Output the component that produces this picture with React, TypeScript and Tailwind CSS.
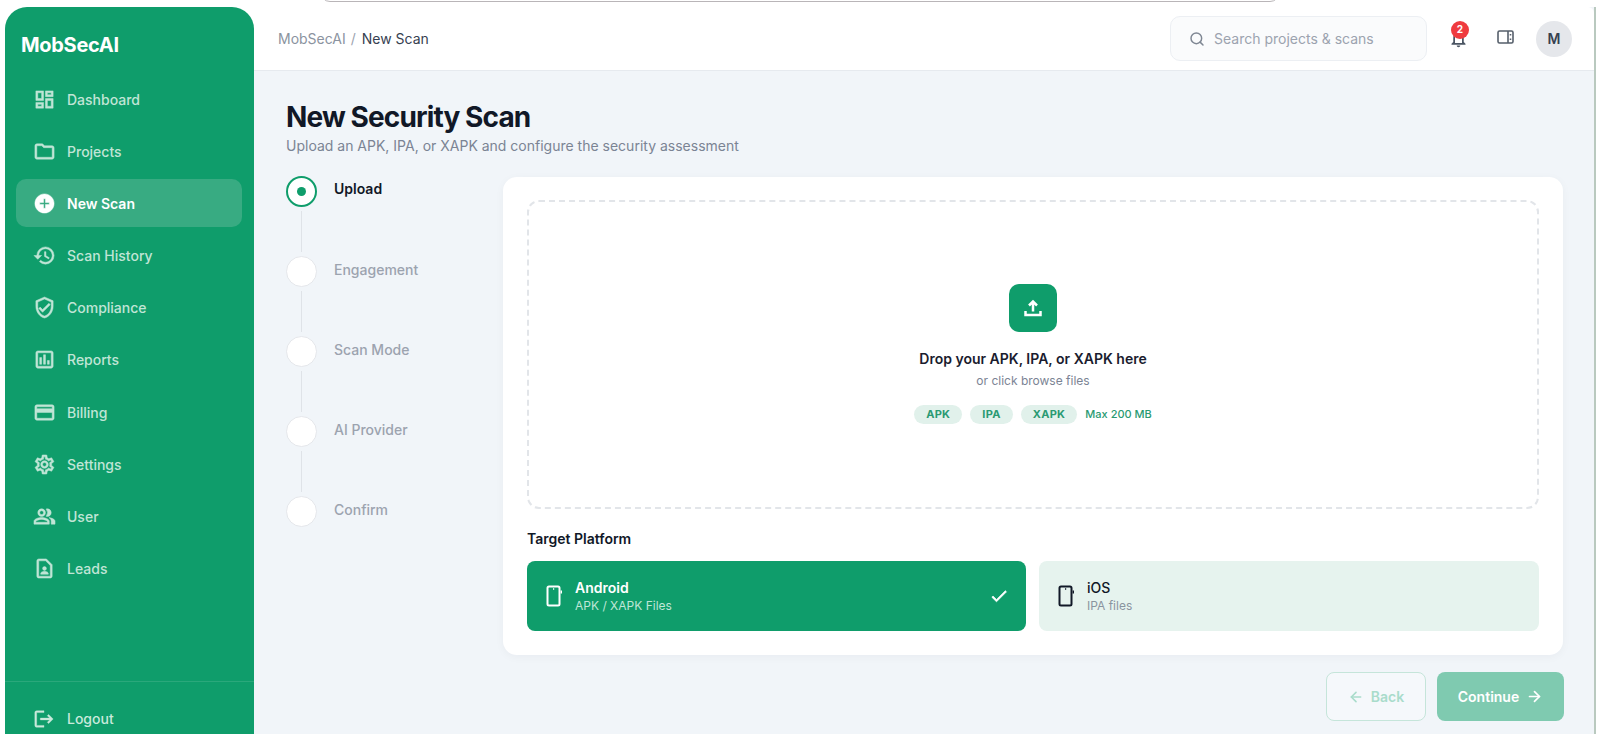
import { ArrowLeft, ArrowRight, Search } from "lucide-react";
import {
  MdAddCircle,
  MdCheck,
  MdHistory,
  MdOutlineAssessment,
  MdOutlineContactPage,
  MdOutlineCreditCard,
  MdOutlineDashboard,
  MdOutlineFolder,
  MdOutlineNotifications,
  MdOutlinePeopleAlt,
  MdOutlineSettings,
  MdOutlineVerifiedUser,
  MdLogout,
} from "react-icons/md";

const nav = [
  { label: "Dashboard", Icon: MdOutlineDashboard },
  { label: "Projects", Icon: MdOutlineFolder },
  { label: "New Scan", Icon: MdAddCircle, active: true },
  { label: "Scan History", Icon: MdHistory },
  { label: "Compliance", Icon: MdOutlineVerifiedUser },
  { label: "Reports", Icon: MdOutlineAssessment },
  { label: "Billing", Icon: MdOutlineCreditCard },
  { label: "Settings", Icon: MdOutlineSettings },
  { label: "User", Icon: MdOutlinePeopleAlt },
  { label: "Leads", Icon: MdOutlineContactPage },
];

const steps = ["Upload", "Engagement", "Scan Mode", "AI Provider", "Confirm"];

function Phone({ className }: { className: string }) {
  return (
    <svg viewBox="0 0 20 24" fill="none" className={className}>
      <rect x="3.5" y="2.5" width="12" height="19" rx="1.5" stroke="currentColor" strokeWidth="2" />
      <path d="M17.3 6.5v3" stroke="currentColor" strokeWidth="1.4" />
      <path d="M9 5h1.2" stroke="currentColor" strokeWidth="1.3" />
    </svg>
  );
}

export default function App() {
  return (
    <div className="relative h-[734px] w-[1600px] overflow-hidden bg-white pl-[5px] pr-[4px] pt-[7px] font-['Inter',sans-serif]">
      <div className="absolute left-[320px] top-[-20px] h-[22px] w-[960px] rounded-b-[10px] border border-[#b9b5b8] bg-white" />
      <div className="flex h-[727px] border-r-2 border-[#b9c9bf]">
        <aside className="flex h-full w-[249px] shrink-0 flex-col rounded-tl-[22px] rounded-tr-[22px] bg-[#0f9d6b]">
          <div className="pl-[16px] pt-[23px] text-[20px] font-bold leading-[30px] tracking-[-0.3px] text-white">
            MobSecAI
          </div>
          <nav className="mt-[15px] flex flex-col gap-[4.2px] pl-[11px] pr-[12px]">
            {nav.map(({ label, Icon, active }) => (
              <div
                key={label}
                className={`flex h-[48px] items-center gap-[11px] rounded-[10px] pl-[17px] text-[14px] ${
                  active ? "bg-[#38ab82] font-semibold text-white" : "font-medium text-[#c0e5d6]"
                }`}
              >
                <Icon className="h-[23px] w-[23px] shrink-0 [&_path:not([fill='none'])]:[stroke-width:0.5]" />
                {label}
              </div>
            ))}
          </nav>
          <div className="mt-auto flex h-[53px] items-start gap-[12px] border-t border-[#2aa87b] pl-[28px] pt-[26px] text-[14px] font-medium text-[#c9eadc]">
            <MdLogout className="h-[22px] w-[22px] shrink-0 [&_path:not([fill='none'])]:[stroke-width:0.4]" />
            <span className="leading-[22px]">Logout</span>
          </div>
        </aside>

        <main className="flex min-w-0 flex-1 flex-col bg-[#f1f5f9]">
          <header className="flex h-[64px] shrink-0 items-center justify-between rounded-tr-[6px] border-b border-[#e6eaef] bg-white pl-[24px] pr-[22px]">
            <div className="flex items-center gap-[5px] text-[14px]">
              <span className="text-[#8b93a0]">MobSecAI</span>
              <span className="text-[#9ca3af]">/</span>
              <span className="ml-[1px] text-[#374151]">New Scan</span>
            </div>
            <div className="flex items-center">
              <div className="flex h-[45px] w-[257px] items-center gap-[9px] rounded-[10px] border border-[#eceff3] bg-[#fafbfc] pl-[18px] text-[14px] text-[#9ca3af]">
                <Search className="h-[16px] w-[16px] text-[#7f8793]" strokeWidth={2.2} />
                Search projects &amp; scans
              </div>
              <div className="relative ml-[20px] flex h-[24px] w-[22px] items-center justify-center">
                <MdOutlineNotifications className="h-[21px] w-[21px] text-[#4b5563]" />
                <span className="absolute left-[4px] top-[-6px] flex h-[18px] w-[18px] items-center justify-center rounded-full bg-[#ef3b3f] text-[10px] font-bold text-white">
                  2
                </span>
              </div>
              <svg viewBox="0 0 17 14" fill="none" className="mb-[3px] ml-[28px] h-[14px] w-[17px] text-[#565f6b]">
                <rect x="1" y="1" width="15" height="12" rx="1.5" stroke="currentColor" strokeWidth="1.6" />
                <path d="M11 1v12" stroke="currentColor" strokeWidth="1.6" />
                <path d="M13.5 4v1.6M13.5 8.4V10" stroke="currentColor" strokeWidth="1.6" />
              </svg>
              <div className="ml-[22px] flex h-[36px] w-[36px] items-center justify-center rounded-full bg-[#e5e7eb] text-[14px] font-semibold text-[#374151]">
                M
              </div>
            </div>
          </header>

          <div className="flex flex-1 flex-col pl-[32px] pr-[31px] pt-[29px]">
            <h1 className="text-[28px] font-bold leading-[34px] tracking-[-0.88px] text-[#111827]">New Security Scan</h1>
            <p className="mt-[2px] text-[14px] leading-[20px] text-[#7b8494]">
              Upload an APK, IPA, or XAPK and configure the security assessment
            </p>

            <div className="mt-[21px] flex">
              <ol className="-mt-[1px] w-[217px] shrink-0">
                {steps.map((step, i) => (
                  <li key={step} className="flex">
                    <div className="flex w-[31px] flex-col items-center">
                      <div
                        className={`flex h-[31px] w-[31px] items-center justify-center rounded-full bg-white ${
                          i === 0 ? "border-2 border-[#0f9d6b]" : "border border-[#e5e7eb]"
                        }`}
                      >
                        {i === 0 && <span className="h-[9px] w-[9px] rounded-full bg-[#0f9d6b]" />}
                      </div>
                      {i < steps.length - 1 && <div className="my-[4px] h-[41px] w-px bg-[#dfe3e8]" />}
                    </div>
                    <span
                      className={`ml-[17px] text-[14px] leading-[20px] ${
                        i === 0 ? "mt-[3px] font-semibold text-[#111827]" : "mt-[4px] font-medium text-[#9ca3af]"
                      }`}
                    >
                      {step}
                    </span>
                  </li>
                ))}
              </ol>

              <div className="flex-1">
                <section className="h-[478px] rounded-[14px] bg-white px-[24px] pt-[23px] shadow-[0_2px_10px_rgba(15,23,42,0.04)]">
                  <div className="flex h-[309px] flex-col items-center rounded-[12px] border-2 border-dashed border-[#e2e5e9] pt-[82px]">
                    <div className="flex h-[48px] w-[48px] items-center justify-center rounded-[10px] bg-[#0f9d6b]">
                      <svg viewBox="0 0 24 24" fill="none" className="h-[24px] w-[24px] text-white">
                        <path
                          d="M12 15.5V6.5M8 9.5l4-4 4 4M4.5 15v4h15v-4"
                          stroke="currentColor"
                          strokeWidth="2.5"
                        />
                      </svg>
                    </div>
                    <p className="mt-[17px] text-[14px] font-semibold leading-[20px] text-[#1a1c2e]">
                      Drop your APK, IPA, or XAPK here
                    </p>
                    <p className="mt-[2px] text-[12px] leading-[20px] text-[#7b8494]">or click browse files</p>
                    <div className="mt-[14px] flex items-center gap-[8px]">
                      {["APK", "IPA", "XAPK"].map((x) => (
                        <span
                          key={x}
                          className="flex h-[19px] items-center rounded-full bg-[#e1f1eb] px-[12px] text-[11px] font-bold tracking-[0.3px] text-[#2a9a72]"
                        >
                          {x}
                        </span>
                      ))}
                      <span className="text-[11px] font-medium text-[#2a9a72]">Max 200 MB</span>
                    </div>
                  </div>

                  <h2 className="mt-[20px] text-[14px] font-semibold leading-[20px] text-[#111827]">Target Platform</h2>
                  <div className="mt-[12px] flex gap-[13px]">
                    <div className="flex h-[70px] flex-1 items-center rounded-[8px] bg-[#0f9d6b] pl-[17px] pr-[17px] text-white">
                      <Phone className="h-[24px] w-[20px] shrink-0" />
                      <div className="ml-[11px] flex-1">
                        <div className="text-[14px] font-semibold leading-[18px]">Android</div>
                        <div className="text-[12px] leading-[17px] text-[#bfe6d7]">APK / XAPK Files</div>
                      </div>
                      <MdCheck className="h-[20px] w-[20px] [&_path:not([fill='none'])]:[stroke-width:0.8]" />
                    </div>
                    <div className="flex h-[70px] flex-1 items-center rounded-[8px] bg-[#e6f3ee] pl-[17px] pr-[18px] text-[#111827]">
                      <Phone className="h-[24px] w-[20px] shrink-0" />
                      <div className="ml-[11px] flex-1">
                        <div className="text-[14px] font-medium leading-[18px]">iOS</div>
                        <div className="text-[12px] leading-[17px] text-[#8a949f]">IPA files</div>
                      </div>
                    </div>
                  </div>
                </section>

                <div className="-mr-[1px] mt-[17px] flex justify-end gap-[11px]">
                  <button className="flex h-[49px] w-[100px] items-center justify-center gap-[7px] rounded-[8px] border border-[#c5e5da] bg-[#f5f8fb] text-[14px] font-semibold text-[#a9dccb]">
                    <ArrowLeft className="h-[16px] w-[16px]" strokeWidth={2.4} />
                    Back
                  </button>
                  <button className="flex h-[49px] w-[127px] items-center justify-center gap-[7px] rounded-[8px] bg-[#7fcab0] text-[14px] font-semibold text-white">
                    Continue
                    <ArrowRight className="h-[17px] w-[17px]" strokeWidth={2.4} />
                  </button>
                </div>
              </div>
            </div>
          </div>
        </main>
      </div>
    </div>
  );
}
